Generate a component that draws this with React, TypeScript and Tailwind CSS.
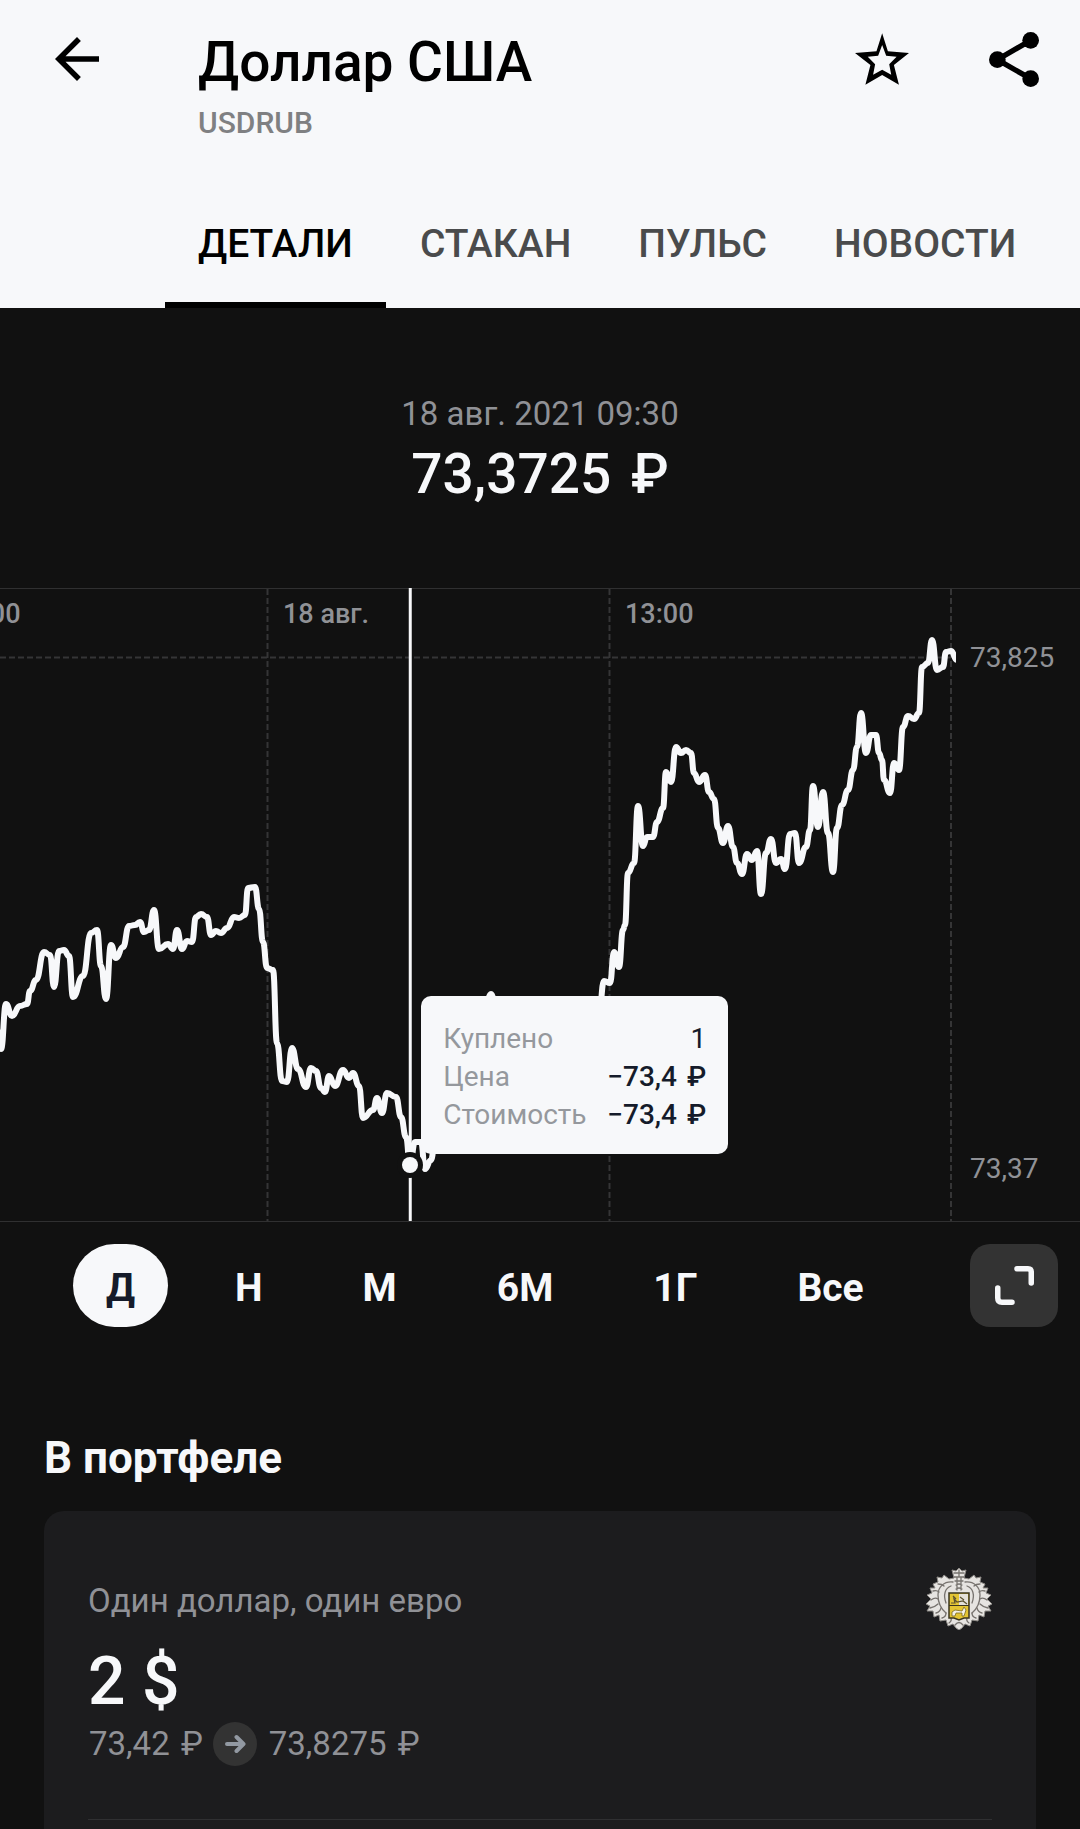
import type { ReactNode } from 'react';

const tabs = ['ДЕТАЛИ', 'СТАКАН', 'ПУЛЬС', 'НОВОСТИ'];

const periods = ['Д', 'Н', 'М', '6М', '1Г', 'Все'];

const quotes: [number, number][] = [
  [-4, 440], [1, 461], [6, 416], [12, 428], [20, 418], [27, 416], [30, 403], [36, 392], [44, 364], [50, 367],
  [54, 399], [59, 363], [64, 362], [69, 368], [73, 409], [83, 388], [91, 345], [97, 342], [101, 378], [106, 411],
  [111, 357], [116, 370], [123, 359], [129, 338], [135, 337], [140, 334], [144, 344], [149, 342], [154, 322],
  [159, 361], [168, 356], [173, 361], [177, 342], [182, 361], [187, 353], [192, 354], [196, 329], [201, 326],
  [207, 329], [211, 347], [216, 343], [221, 345], [227, 340], [234, 329], [239, 330], [245, 327], [248, 300],
  [255, 299], [259, 321], [263, 354], [267, 380], [273, 382], [277, 455], [282, 493], [287, 494], [292, 460],
  [298, 481], [306, 499], [311, 480], [316, 483], [321, 500], [325, 504], [329, 488], [335, 498], [343, 482],
  [349, 490], [353, 485], [359, 498], [363, 530], [373, 522], [377, 510], [382, 525], [387, 505], [396, 509],
  [401, 529], [406, 549], [410, 577], [415, 554], [421, 554], [425, 581], [431, 572], [436, 540], [446, 520],
  [458, 482], [470, 470], [482, 440], [491, 406], [500, 450], [516, 470], [534, 462], [552, 474], [570, 450],
  [588, 440], [599, 425], [604, 393], [610, 395], [614, 364], [619, 379], [623, 342], [625, 337], [628, 285],
  [634, 275], [638, 218], [643, 258], [647, 249], [653, 249], [657, 234], [663, 220], [666, 184], [671, 194],
  [676, 159], [681, 165], [686, 162], [691, 165], [694, 185], [699, 194], [705, 187], [709, 204], [714, 211],
  [718, 240], [723, 255], [728, 238], [733, 259], [737, 275], [742, 286], [747, 266], [752, 272], [757, 263],
  [761, 306], [766, 265], [771, 251], [776, 275], [781, 271], [785, 281], [790, 246], [795, 245], [799, 275],
  [806, 259], [810, 242], [813, 198], [818, 239], [823, 204], [828, 245], [833, 284], [837, 240], [842, 217],
  [848, 202], [853, 182], [857, 159], [861, 125], [866, 165], [871, 147], [876, 147], [879, 165], [882, 172],
  [884, 192], [890, 205], [894, 175], [899, 182], [903, 139], [908, 128], [914, 131], [919, 125], [922, 79],
  [928, 75], [932, 52], [937, 82], [943, 79], [946, 64], [951, 63], [957, 72],
];

// Horizontal-tangent bezier between neighbouring quotes
const linePath = quotes.reduce((path, [x, y], i) => {
  if (i === 0) return `M${x} ${y}`;
  const [px, py] = quotes[i - 1];
  const mid = (px + x) / 2;
  return `${path}C${mid} ${py} ${mid} ${y} ${x} ${y}`;
}, '');

const Rubles = ({ amount, large = false }: { amount: string; large?: boolean }) => (
  <>
    {amount} <span className={large ? 'ml-[6px]' : 'ml-[3px]'}>₽</span>
  </>
);

const deal = [
  { label: 'Куплено', value: '1', strong: false },
  { label: 'Цена', value: <Rubles amount="−73,4" />, strong: true },
  { label: 'Стоимость', value: <Rubles amount="−73,4" />, strong: true },
];

const IconButton = ({ label, children }: { label: string; children: ReactNode }) => (
  <button type="button" aria-label={label} className="flex shrink-0 items-center justify-center">
    {children}
  </button>
);

const BackIcon = () => (
  <svg viewBox="0 0 24 24" className="size-[66px]" fill="currentColor">
    <path d="M20 11H7.83l5.59-5.59L12 4l-8 8 8 8 1.41-1.41L7.83 13H20z" />
  </svg>
);

const StarIcon = () => (
  <svg viewBox="44 70 161 154" className="h-[52px] w-[54px]" fill="currentColor" fillRule="evenodd">
    <path d="M125 70L142 124L205 129L160 165L175 224L125 195L75 224L90 165L44 129L108 124ZM125 105L113 137L82 140L104 163L98 194L125 179L152 194L146 163L168 140L137 137Z" />
  </svg>
);

const ShareIcon = () => (
  <svg viewBox="447 64 150 165" className="h-[55px] w-[50px]" fill="currentColor">
    <path d="M572 89L472 147L572 204" fill="none" stroke="currentColor" strokeWidth="16" />
    <circle cx="472" cy="147" r="25" />
    <circle cx="572" cy="89" r="25" />
    <circle cx="572" cy="204" r="25" />
  </svg>
);

const ExpandIcon = () => (
  <svg viewBox="0 0 39 39" className="size-[39px]" fill="none" stroke="currentColor" strokeWidth="5.5" strokeLinecap="round">
    <path d="M22 2.750H33Q36.250 2.750 36.250 6V17" />
    <path d="M2.750 22V32Q2.750 36.250 7 36.250H17" />
  </svg>
);

const Emblem = () => (
  <svg viewBox="0 0 66 62" className="h-[62px] w-[66px] shrink-0 self-start">
    <path
      d="M27 6L26 2L30 3L33 0L36 3L40 2L39 6L38 10L43 11L48 7L50 10L55 9L54 14L59 16L57 20L62 20L60 25L65 27L61 31L66 36L62 38L65 43L59 43L58 49L53 47L52 53L46 52L44 58L39 56L36 60L33 62L30 60L27 56L22 58L20 52L14 53L13 47L8 49L7 43L1 43L4 38L0 36L5 31L1 27L6 25L4 20L9 20L7 16L12 14L11 9L16 10L18 7L23 11L28 10Z"
      fill="#e6e4e1"
      stroke="#8d8a86"
      strokeWidth="1"
    />
    <g fill="none" stroke="#77736f" strokeWidth="1.300" strokeLinecap="round">
      <path d="M28 5H38M28 9H38M29 13H37M30 17Q33 15 36 17M30 21Q33 19 36 21M33 2V8M31 10V22M35 10V22" />
      <path d="M27 14C18 13 12 19 12 27S14 40 20 45" />
      <path d="M39 14C48 13 54 19 54 27S52 40 46 45" />
      <path d="M25 18C19 20 17 27 20 35M41 18C47 20 49 27 46 35" />
      <path d="M12 16Q16 16 18 18M54 16Q50 16 48 18M7 23Q11 22 13 24M59 23Q55 22 53 24M5 32Q9 29 12 31M61 32Q57 29 54 31" />
      <path d="M4 40Q9 39 12 36M62 40Q57 39 54 36M10 45Q14 44 15 40M56 45Q52 44 51 40M16 50Q20 49 20 45M50 50Q46 49 46 45" />
      <path d="M23 55Q26 53 25 50M43 55Q40 53 41 50M29 57Q33 52 37 57" />
    </g>
    <path d="M23 25H43V50H38L33 52L28 50H23Z" fill="#e3c534" stroke="#3b361f" strokeWidth="1.500" />
    <path d="M33 26H42V37H33Z" fill="#e4e1d8" />
    <path d="M23 37.500H43" stroke="#3b361f" strokeWidth="1" />
    <path d="M25 35H29L28 31L31 34L37 33L41 36M27 28L30 31M34 29L38 32" fill="none" stroke="#5c5330" strokeWidth="1.200" />
    <path d="M26 48V44L29 42L36 43L38 39L40 42L38 48H36V45L30 45L29 48Z" fill="#f4f1e6" stroke="#7a6a1e" strokeWidth=".8" />
  </svg>
);

const Header = () => (
  <header className="bg-[#f7f8fa] text-black">
    <div className="flex h-[180px] items-start pt-[30px] pr-[41px] pl-[44px]">
      <div className="flex h-[58px] items-center">
        <IconButton label="Назад">
          <BackIcon />
        </IconButton>
      </div>
      <div className="ml-[88px]">
        <h1 className="text-[55px] leading-[64px] font-medium">Доллар США</h1>
        <p className="mt-[9px] text-[30px] leading-[40px] font-medium text-[#7f8082]">USDRUB</p>
      </div>
      <div className="ml-auto flex h-[58px] items-center gap-20">
        <IconButton label="В избранное">
          <StarIcon />
        </IconButton>
        <IconButton label="Поделиться">
          <ShareIcon />
        </IconButton>
      </div>
    </div>
    <nav className="flex gap-px overflow-hidden pl-[165px]">
      {tabs.map((tab, i) => (
        <a
          key={tab}
          href="#"
          className={`flex h-32 items-center border-y-[6px] border-t-transparent px-[33px] text-[39px] leading-[48px] font-medium ${
            i === 0 ? 'border-b-black text-black' : 'border-b-transparent text-[#4a4b4c]'
          }`}
        >
          {tab}
        </a>
      ))}
    </nav>
  </header>
);

const Chart = () => (
  <div className="relative">
    <svg viewBox="0 0 1080 634" className="block w-full" role="img" aria-label="График курса">
      <defs>
        <clipPath id="plot">
          <rect width="956" height="634" />
        </clipPath>
      </defs>
      <g stroke="#303031" strokeWidth="1">
        <path d="M0 .5H1080M0 633.5H1080" />
      </g>
      <g stroke="#353536" strokeWidth="2" strokeDasharray="6 3">
        <path d="M267.500 1V633M609.500 1V633M951 1V633" />
        <path d="M0 69.500H952" />
      </g>
      <g fill="#909196" fontSize="27">
        <g fontWeight="500">
          <text x="-48" y="35">10:00</text>
          <text x="283" y="35">18 авг.</text>
          <text x="625" y="35">13:00</text>
        </g>
        <text x="970" y="79" fontSize="28">73,825</text>
        <text x="970" y="590" fontSize="28">73,37</text>
      </g>
      <path d="M410.250 0V633" stroke="#f7f8fa" strokeWidth="3" />
      <path d={linePath} clipPath="url(#plot)" fill="none" stroke="#f7f8fa" strokeWidth="6" strokeLinecap="round" strokeLinejoin="round" />
      <circle cx="410" cy="577" r="13" fill="#111111" />
      <circle cx="410" cy="577" r="8" fill="#f7f8fa" />
    </svg>
    <dl className="absolute top-[408px] left-[39%] w-[307px] rounded-[10px] bg-[#f7f8fa] px-[22px] pt-6 pb-5 text-[28px] leading-[38px]">
      {deal.map(({ label, value, strong }) => (
        <div key={label} className="flex justify-between">
          <dt className="text-[#95989d]">{label}</dt>
          <dd className={strong ? 'font-medium text-[#151b2a]' : 'text-[#151b2a]'}>{value}</dd>
        </div>
      ))}
    </dl>
  </div>
);

const Periods = () => (
  <div className="mt-[22px] flex items-center justify-between pr-[22px] pl-[73px]">
    <div className="flex gap-[34px]">
      {periods.map((period, i) => (
        <button
          key={period}
          type="button"
          className={`h-[83px] rounded-full px-[33px] pt-1 text-[39px] leading-[48px] font-bold ${
            i === 0 ? 'bg-[#f7f8fa] text-[#151b2a]' : 'text-[#f7f8fa]'
          }`}
        >
          {period}
        </button>
      ))}
    </div>
    <button
      type="button"
      aria-label="На весь экран"
      className="flex h-[83px] w-[88px] items-center justify-center rounded-[20px] bg-[#333333]"
    >
      <ExpandIcon />
    </button>
  </div>
);

const Portfolio = () => (
  <section className="mt-[103px] flex grow flex-col px-[44px]">
    <h2 className="text-[44px] leading-[56px] font-bold">В портфеле</h2>
    <div className="mt-[25px] grow rounded-t-[20px] bg-[#1c1c1e] px-[44px] pt-[57px]">
      <div className="flex h-[66px] items-center justify-between">
        <p className="text-[33px] leading-[44px] text-[#909196]">Один доллар, один евро</p>
        <Emblem />
      </div>
      <p className="mt-[10px] text-[66px] leading-[76px] font-medium">2 $</p>
      <div className="mt-[2px] flex items-center pl-px text-[33px] leading-[44px] text-[#909196]">
        <span>
          <Rubles amount="73,42" />
        </span>
        <span className="mr-3 ml-[10px] flex size-[44px] items-center justify-center rounded-full bg-[#333333]">
          <svg viewBox="0 0 22 20" className="h-5 w-[22px]" fill="none" stroke="#9299a2" strokeWidth="4" strokeLinecap="round" strokeLinejoin="round">
            <path d="M3 10H19M12.500 3L19.500 10L12.500 17" />
          </svg>
        </span>
        <span>
          <Rubles amount="73,8275" />
        </span>
      </div>
      <hr className="mt-[53px] border-[#303032]" />
    </div>
  </section>
);

export default function App() {
  return (
    <div className="flex min-h-screen flex-col bg-[#111111] font-[Roboto,sans-serif] text-[#f7f8fa]">
      <Header />
      <main className="flex grow flex-col">
        <div className="pt-[84px] pb-[82px] text-center">
          <p className="text-[33px] leading-[44px] text-[#909196]">18 авг. 2021 09:30</p>
          <p className="mt-[6px] text-[55px] leading-[64px] font-medium">
            <Rubles amount="73,3725" large />
          </p>
        </div>
        <Chart />
        <Periods />
        <Portfolio />
      </main>
    </div>
  );
}
